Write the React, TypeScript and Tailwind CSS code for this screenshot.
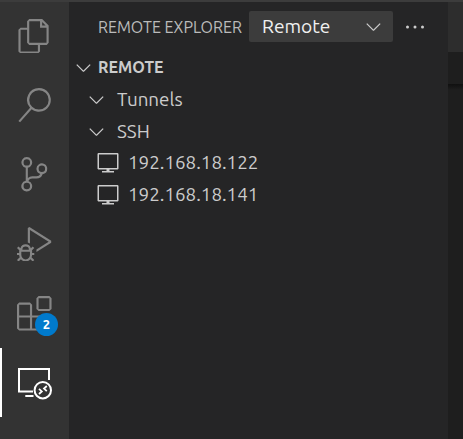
import { VscFiles, VscSearch, VscSourceControl, VscDebugAlt, VscExtensions, VscChevronDown, VscEllipsis, VscVm } from "react-icons/vsc";

const hosts = ["192.168.18.122", "192.168.18.141"];
const groups = ["Tunnels", "SSH"];
const tools = [VscFiles, VscSearch, VscSourceControl, VscDebugAlt, VscExtensions];

function RemoteIcon() {
  return (
    <svg width="36" height="36" viewBox="0 0 36 36" fill="none" stroke="currentColor" strokeWidth="2">
      <path d="M33 15V4H3v22.5h14M9.3 31h8.2" />
      <circle cx="26.8" cy="25.2" r="8.2" />
      <path strokeWidth="1.8" d="m23 23.8 2.8 2.6-2.8 2.6M30.8 21l-2.8 2.6 2.8 2.6" />
    </svg>
  );
}

export default function App() {
  return (
    <div className="flex h-[439px] w-[463px] overflow-hidden border-t-2 border-[#3c3c3c] bg-[#1e1e1e] font-['Ubuntu','Noto_Sans',sans-serif] text-[#cccccc]">
      <nav className="flex w-[69px] shrink-0 flex-col bg-[#333333] text-[#858585]">
        {tools.map((Icon, i) => (
          <button key={i} className="relative -mt-px flex h-[70.3px] shrink-0 items-center justify-center">
            <Icon size={34.56} />
            {i === 4 && <span className="absolute right-[11px] bottom-[12px] flex size-[23px] items-center justify-center rounded-full bg-[#007acc] text-[13px] font-bold text-white">2</span>}
          </button>
        ))}
        <button className="flex h-[69px] shrink-0 items-center border-l-2 border-white pl-[14px] text-white"><RemoteIcon /></button>
      </nav>
      <aside className="w-[379px] shrink-0 bg-[#252526]">
        <header className="flex h-[49px] items-center pl-[29px]">
          <h1 className="w-[151px] text-base whitespace-nowrap text-[#bbbbbb]">REMOTE EXPLORER</h1>
          <button className="flex h-[31px] w-[144px] items-center justify-between rounded-[2px] bg-[#3c3c3c] pr-2 pl-[13px] text-[19.2px] text-[#f0f0f0]">Remote<VscChevronDown className="text-[#cccccc]" size={23} /></button>
          <VscEllipsis className="ml-[10px]" size={24} />
        </header>
        <div className="flex h-8 items-center gap-[3px] pl-[3px] text-base font-bold"><VscChevronDown size={23} />REMOTE</div>
        {groups.map((name) => <div key={name} className="flex h-8 items-center gap-[9px] pl-4 text-[18.8px]"><VscChevronDown size={23} />{name}</div>)}
        <div className="-mt-px">
          {hosts.map((host) => <div key={host} className="flex h-8 items-center gap-2 pl-[27px] text-[18.8px]"><VscVm size={24} /><span>{host}</span></div>)}
        </div>
      </aside>
      <main className="min-w-0 flex-1 overflow-hidden">
        <div className="h-[50px] bg-[#2d2d2d]" />
        <div className="h-8 bg-[#1e1e1e]" />
        <div className="h-1.5 bg-linear-to-b from-[#101010] to-[#1e1e1e]" />
      </main>
    </div>
  );
}
